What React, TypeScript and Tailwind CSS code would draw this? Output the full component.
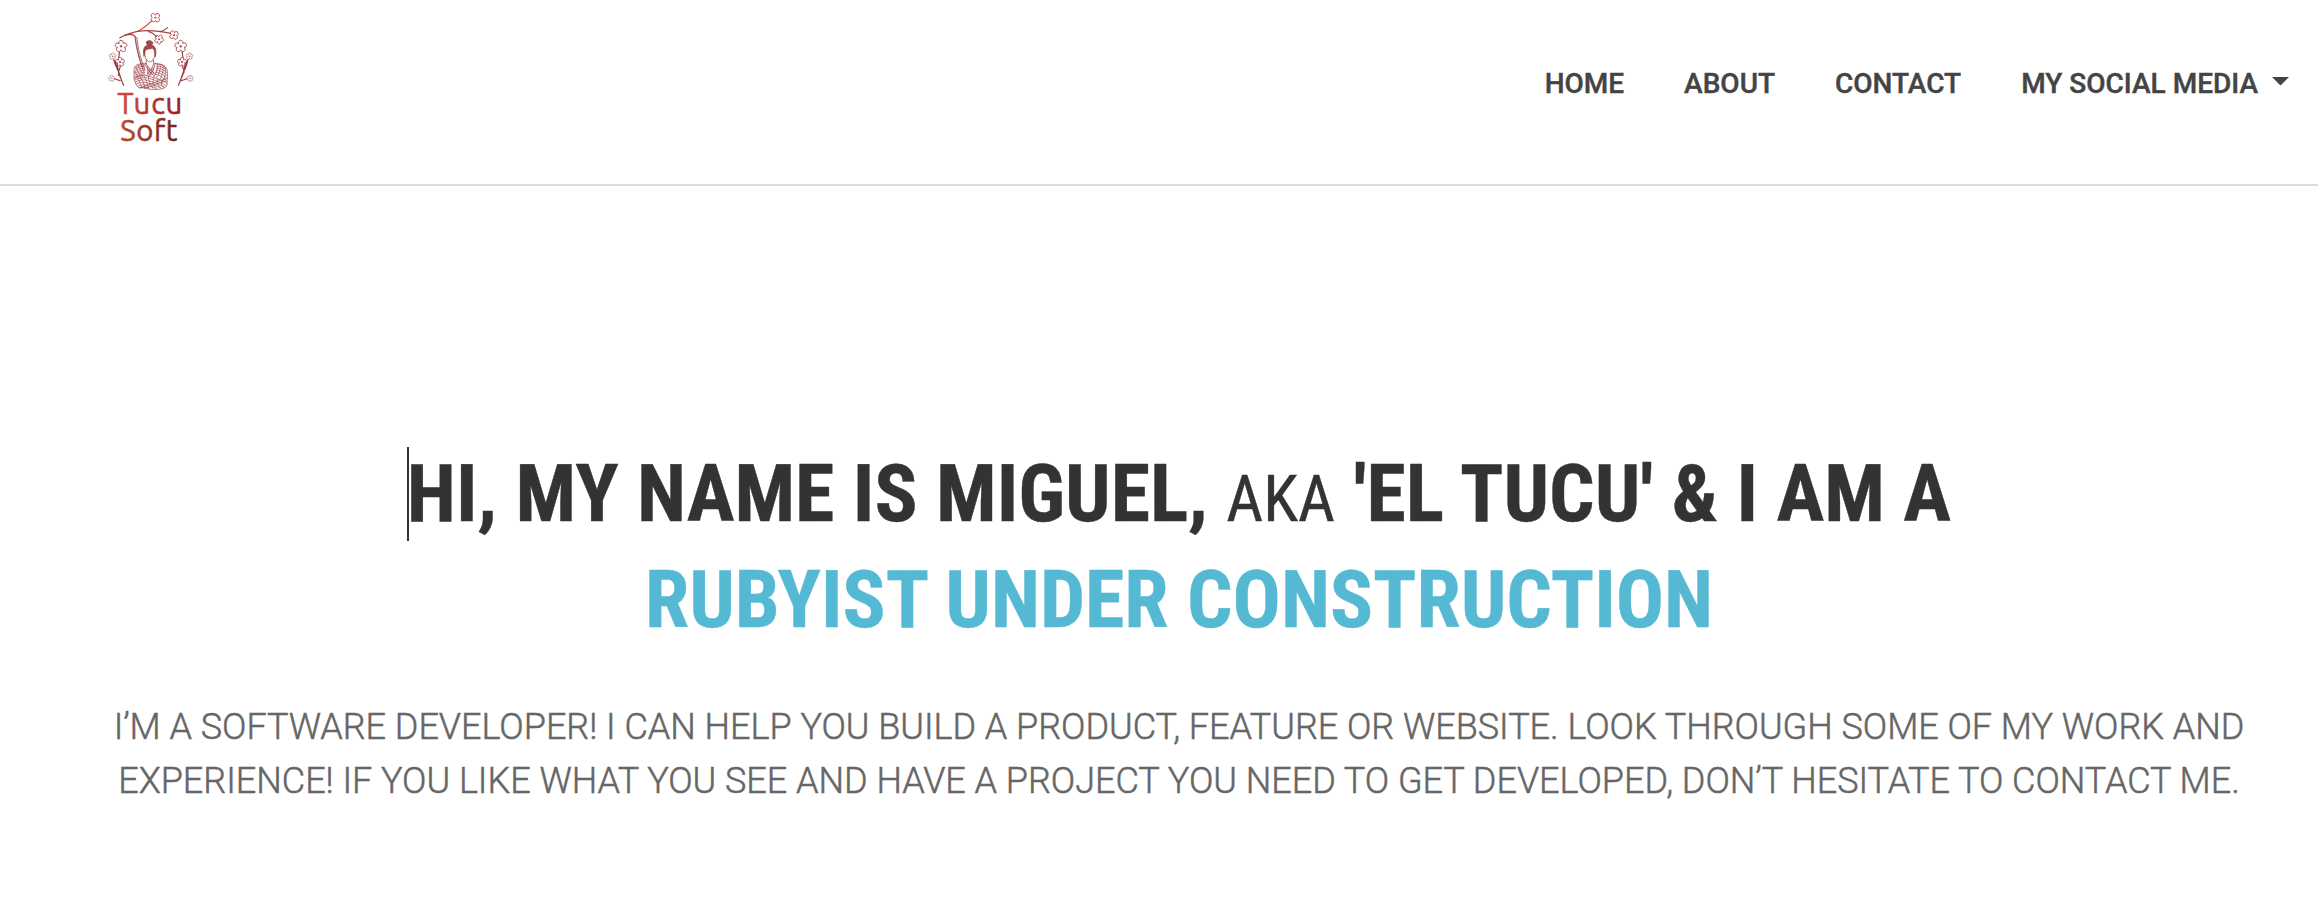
type BlossomProps = { x: number; y: number; r: number; turn?: number; petals?: number; color?: string };

function Blossom({ x, y, r, turn = -90, petals = 5, color = "#a5474a" }: BlossomProps) {
  const at = (deg: number, len: number) => {
    const a = ((turn + deg) * Math.PI) / 180;
    return `${(x + Math.cos(a) * len).toFixed(1)} ${(y + Math.sin(a) * len).toFixed(1)}`;
  };
  const step = 360 / petals;
  const arc = (r * (petals === 5 ? 0.4 : 0.47)).toFixed(1);
  let d = `M${at(-step / 2, r * 0.62)}`;
  for (let i = 0; i < petals; i++) {
    d += `A${arc} ${arc} 0 1 1 ${at(i * step + step / 2, r * 0.62)}`;
  }
  return (
    <g stroke={color} strokeWidth={r > 11 ? 2.8 : 2}>
      <path d={d + "Z"} />
      <circle cx={x} cy={y} r={r * 0.14} fill={color} />
    </g>
  );
}

function Logo() {
  return (
    <svg viewBox="0 0 330 450" className="h-[150px] w-[110px] shrink-0" fill="none" strokeLinecap="round" strokeLinejoin="round">
      <defs>
        <linearGradient id="top" x1="68" y1="0" x2="256" y2="0" gradientUnits="userSpaceOnUse">
          <stop offset="0" stopColor="#d24a38" />
          <stop offset="1" stopColor="#9c1f20" />
        </linearGradient>
        <linearGradient id="bottom" x1="76" y1="0" x2="246" y2="0" gradientUnits="userSpaceOnUse">
          <stop offset="0" stopColor="#bd4a30" />
          <stop offset="1" stopColor="#6f2420" />
        </linearGradient>
      </defs>

      <g stroke="#a8423f" strokeWidth="3.4">
        <path d="M74 114C88 105 104 100 124 95C150 90 190 92 226 100" />
        <path d="M90 106C108 100 118 104 123 114" stroke="#9c3a3c" />
        <path d="M130 93C148 84 158 74 171 62" stroke="#c0463c" />
        <path d="M195 95C204 93 211 89 218 83" />
        <path d="M160 94C172 97 178 102 184 109" />
      </g>
      <Blossom x={181} y={53} r={14} petals={4} turn={-45} color="#cf4a40" />
      <Blossom x={237} y={105} r={13} petals={4} turn={-35} color="#b5423e" />
      <Blossom x={192} y={118} r={13} turn={-60} color="#b5423e" />

      <g stroke="#9c3a3c" strokeWidth="3.4">
        <path d="M73 156C73 162 72 168 71 173M56 178C58 190 63 198 67 208M76 200C71 210 69 215 70 226M60 183C66 202 70 222 86 256M66 190C68 210 76 232 85 254M58 236L76 242" />
        <path d="M262 156C262 162 263 168 264 173M279 178C277 190 274 198 270 208M262 200C266 206 268 210 267 218M276 183C272 202 266 222 250 256M271 190C268 210 260 232 251 254M276 236L258 242" />
      </g>
      <Blossom x={78} y={139} r={17} />
      <Blossom x={53} y={169} r={10} color="#b86a6a" />
      <Blossom x={75} y={186} r={13} />
      <Blossom x={50} y={235} r={9} color="#c07f80" />
      <Blossom x={257} y={139} r={17} />
      <Blossom x={283} y={169} r={10} color="#b86a6a" />
      <Blossom x={261} y={186} r={13} />
      <Blossom x={285} y={235} r={9} color="#c07f80" />

      <g stroke="#93373b" strokeWidth="2.2">
        <path d="M120 112C122 135 130 170 146 214M126 113C127 138 136 174 150 210M122 118C125 145 134 182 143 203" />
        <path d="M154 127C153 121 170 120 173 127C176 131 171 135 164 134C157 135 153 132 154 127Z" fill="#a34a4c" />
        <path d="M147 168C142 144 150 134 164 134C179 134 186 146 181 170C180 158 178 148 172 144C166 148 156 146 152 150C149 155 149 161 147 168Z" fill="#a34a4c" />
        <path d="M149 158C149 173 155 184 164 186C174 184 180 173 180 156" />
        <path d="M154 182L153 193M175 181L177 191" />
        <path d="M153 190C160 202 168 214 181 222M177 190C172 204 162 216 154 226M149 193C158 208 166 220 178 228M181 191C178 206 170 218 160 230" />
      </g>
      <g stroke="#9a4145" strokeWidth="2">
        <path d="M151 190C137 191 124 192 119 201C115 210 118 221 117 231C118 244 122 256 132 264C150 262 156 266 164 268C180 268 198 270 210 263C216 259 218 250 216 240C219 224 219 212 212 201C206 193 192 191 181 190" />
        <path d="M147 195C136 193 128 197 121 203M148 200C137 198 128 202 120 210M149 206C138 204 128 208 119 217M150 212C139 210 128 214 119 223M150 217C140 216 129 220 119 229M149 222C140 221 130 226 120 235" />
        <path d="M129 194C133 206 139 216 147 223M123 202C127 215 134 225 143 230M119 214C124 225 130 233 139 238" />
        <path d="M186 193C196 192 206 196 211 202M185 198C196 198 206 202 214 210M184 204C196 204 206 209 215 218M183 210C194 211 206 216 215 226M181 216C192 217 204 223 215 234M180 222C190 224 202 231 214 242" />
        <path d="M188 194C188 208 184 220 176 231M196 194C197 210 192 224 184 234M204 197C206 214 202 228 193 240M210 202C213 218 210 234 202 246" />
        <path d="M158 199L158 222M163 205L162 226M169 208L168 226M174 202L174 221" />
        <path d="M118 234C130 228 146 224 158 228C172 232 186 236 198 240C206 244 212 247 216 250M119 240C132 234 146 231 158 234C172 238 188 243 213 257M121 246C134 240 146 238 158 241C172 246 188 251 208 261M124 252C136 247 148 245 160 249C172 253 184 257 198 264" />
        <path d="M128 258C140 253 150 253 160 257C170 260 176 262 184 265M134 263C144 260 152 260 162 265" />
        <path d="M124 229C130 238 136 250 140 263M134 227C141 237 147 250 150 264M146 226C152 238 158 250 160 265M160 230C160 242 166 254 174 265M176 235C172 244 174 256 184 264M188 238C184 246 188 256 196 263M202 241C196 248 198 256 206 262" />
        <path d="M214 243C200 246 188 250 176 256C168 259 158 264 148 265M216 236C198 240 184 245 170 251C158 255 148 260 138 263" />
      </g>

      <g className="font-['Ubuntu','Noto_Sans',sans-serif] text-[88px] normal-case">
        <text x="67" y="342" fill="url(#top)" stroke="url(#top)" strokeWidth="1.6" textLength="195">Tucu</text>
        <text x="76" y="423" fill="url(#bottom)" stroke="url(#bottom)" strokeWidth="1.6" textLength="171">Soft</text>
      </g>
    </svg>
  );
}

export default function App() {
  return (
    <div className="min-h-[924px] w-full overflow-hidden bg-white font-['Roboto',sans-serif] uppercase">
      <header className="flex h-[186px] items-start justify-between border-b-2 border-[#dcdcdc] pr-[29px] pl-[95px]">
        <Logo />
        <nav className="mt-[63px] flex gap-[60px] text-[28px] leading-[42px] font-medium whitespace-nowrap text-[#444] [-webkit-text-stroke:0.4px]">
          <a>Home</a>
          <a>About</a>
          <a>Contact</a>
          <a className="flex">
            My social media
            <svg viewBox="0 0 17 9" className="mt-[14px] ml-[14px] h-[9px] w-[17px]">
              <path d="M0 0H17L8.5 8.5Z" fill="#444" />
            </svg>
          </a>
        </nav>
      </header>

      <main className="pt-[255px] pl-[40px] text-center">
        <h1 className="font-['Roboto_Condensed','Roboto',sans-serif] text-[80px] leading-[106px] font-bold whitespace-nowrap text-[#333] [-webkit-text-stroke:0.4px]">
          <span className="relative">
            <span className="absolute top-0 left-0 h-[94px] w-[2px] bg-[#333]" />
            Hi, my name is Miguel,
          </span>{" "}
          <small className="text-[64px] leading-none font-normal">aka</small> 'El Tucu' &amp; I am a
          <br />
          <span className="text-[#56b9d4]">Rubyist under construction</span>
        </h1>
        <p className="mt-[47px] text-[36px] leading-[54px] font-light tracking-[-0.015px] whitespace-nowrap text-[#666] [-webkit-text-stroke:0.5px]">
          I’m a software developer! I can help you build a product, feature or website. Look through some of my work and
          <br />
          experience! If you like what you see and have a project you need to get developed, don’t hesitate to contact me.
        </p>
      </main>
    </div>
  );
}
